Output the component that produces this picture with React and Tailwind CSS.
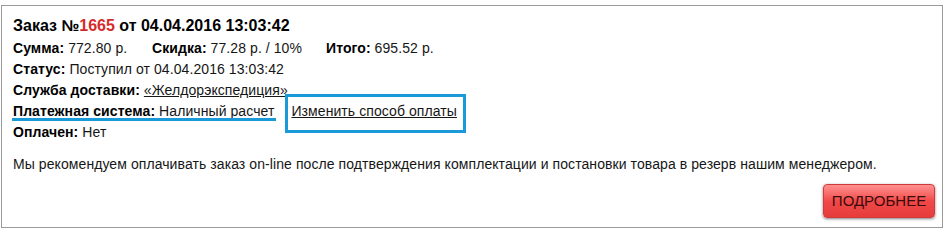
import React from "react";

export default function App() {
  return (
    <div className="w-[948px] h-[233px] bg-white pl-[1px] pt-[5px]" style={{ fontFamily: '"Liberation Sans", Arial, sans-serif' }}>
      <div className="relative w-[942px] h-[223px] border border-[#9a9a9a] pl-[11px] pr-[7px] pt-[10px] text-[#161616] flex flex-col">
        <div className="text-[16px] leading-[20px] font-bold text-black mb-[2px]">
          Заказ №<span className="text-[#d62b2b]">1665</span> от 04.04.2016 13:03:42
        </div>
        <div className="text-[14px] leading-[21px] tracking-[0.08px]">
          <div className="flex">
            <span className="w-[139px]"><b className="text-black">Сумма:</b> 772.80 р.</span>
            <span className="w-[174px]"><b className="text-black">Скидка:</b> 77.28 р. / 10%</span>
            <span><b className="text-black">Итого:</b> 695.52 р.</span>
          </div>
          <div><b className="text-black">Статус:</b> Поступил от 04.04.2016 13:03:42</div>
          <div><b className="text-black">Служба доставки:</b> <a href="#" className="underline text-[#161616]">«Желдорэкспедиция»</a></div>
          <div className="flex">
            <span className="relative">
              <b className="text-black">Платежная система:</b> Наличный расчет
              <span className="absolute left-[-1px] right-[-2px] top-[17px] h-[3px] bg-[#1a9ad8]"></span>
            </span>
            <span className="relative ml-[17px]">
              <a href="#" className="underline text-[#161616]">Изменить способ оплаты</a>
              <span className="absolute left-[-6px] right-[-9px] top-[-7px] bottom-[-11px] border-[3px] border-[#1a9ad8]"></span>
            </span>
          </div>
          <div><b className="text-black">Оплачен:</b> Нет</div>
        </div>
        <div className="text-[14px] leading-[20px] mt-[11px] tracking-[0.08px]">
          Мы рекомендуем оплачивать заказ on-line после подтверждения комплектации и постановки товара в резерв нашим менеджером.
        </div>
        <div className="flex justify-end mt-[10px]">
          <button className="w-[112px] h-[34px] rounded-[4px] text-[15px] text-[#3b0c0c] bg-gradient-to-b from-[#ff9090] via-[#f04848] to-[#e63c3c] shadow-[0_1px_3px_rgba(0,0,0,0.5)] border border-[#d23a3a]">
            ПОДРОБНЕЕ
          </button>
        </div>
      </div>
    </div>
  );
}
